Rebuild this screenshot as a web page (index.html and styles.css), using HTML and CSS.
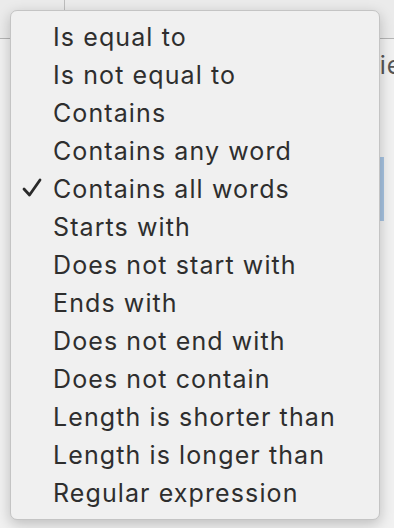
FILE: index.html
```html
<!DOCTYPE html>
<html lang="en">
<head>
  <meta charset="UTF-8" />
  <meta name="viewport" content="width=device-width, initial-scale=1.0"/>
  <title>Condition Menu</title>
  <link rel="stylesheet" href="styles.css">
</head>
<body>
  <div class="window">
    <div class="toolbar">
      <div class="toolbar-side"></div>
    </div>
    <div class="field-row"><span>Field</span></div>
    <div class="rule-list">
      <div class="rule selected"></div>
    </div>
  </div>

  <ul class="popup-menu" id="conditionMenu">
    <li>Is equal to</li>
    <li>Is not equal to</li>
    <li>Contains</li>
    <li>Contains any word</li>
    <li class="checked">
      <svg class="check" width="20" height="20" viewBox="0 0 20 20">
        <path d="M2 11 L7.5 17 L18 2" fill="none" stroke="#2a2a2a" stroke-width="2.8" stroke-linecap="round" stroke-linejoin="round"/>
      </svg>
      Contains all words
    </li>
    <li>Starts with</li>
    <li>Does not start with</li>
    <li>Ends with</li>
    <li>Does not end with</li>
    <li>Does not contain</li>
    <li>Length is shorter than</li>
    <li>Length is longer than</li>
    <li>Regular expression</li>
  </ul>
</body>
</html>
```

FILE: styles.css
```css
body {
  margin: 0;
  font-family: Inter, "Liberation Sans", Arial, sans-serif;
  background-color: #f1f1f1;
  overflow: hidden;
}
.window {
  height: 528px;
  display: flex;
  flex-direction: column;
}
.toolbar {
  height: 38px;
  display: flex;
  border-bottom: 1px solid #b4b4b4;
  background-color: #ebebeb;
}
.toolbar-side {
  width: 64px;
  border-right: 1px solid #bdbdbd;
}
.field-row {
  padding: 11px 0 0 364px;
  font-size: 25px;
  letter-spacing: 1px;
  color: #555;
  white-space: nowrap;
  overflow: hidden;
}
.rule-list {
  margin-top: 77px;
}
.rule {
  height: 64px;
}
.selected {
  margin-left: 64px;
  width: 320px;
  background-color: #a7c3e1;
}
.popup-menu {
  position: absolute;
  left: 10px;
  top: 10px;
  width: 368px;
  margin: 0;
  padding: 7px 0;
  list-style: none;
  background-color: #f0f0f0;
  border: 1px solid #c4c4c4;
  border-radius: 7px;
  box-shadow: 0 4px 14px rgba(0, 0, 0, 0.22);
}
.popup-menu li {
  height: 38px;
  line-height: 38px;
  padding-left: 42px;
  font-size: 25px;
  letter-spacing: 1.1px;
  color: #2e2e2e;
  position: relative;
  white-space: nowrap;
}
.popup-menu .check {
  position: absolute;
  left: 11px;
  top: 8px;
}
```
